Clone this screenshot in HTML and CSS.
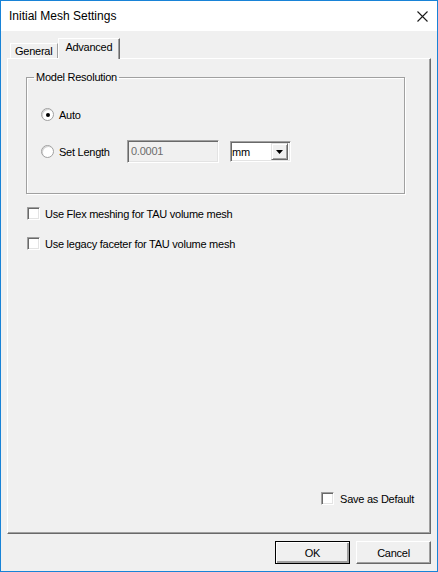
FILE: index.html
```html
<!DOCTYPE html>
<html lang="en">
  <head>
    <meta charset="UTF-8" />
    <title>Initial Mesh Settings</title>
    <link rel="stylesheet" href="styles.css">
  </head>
  <body>
    <div class="window">
      <div class="titlebar">
        <span class="title">Initial Mesh Settings</span>
        <svg class="close" width="11" height="11" viewBox="0 0 11 11">
          <path d="M0.5 0.5 L10.5 10.5 M10.5 0.5 L0.5 10.5" stroke="#1a1a1a" stroke-width="1.1" fill="none" />
        </svg>
      </div>
      <div class="client">
        <div class="tabs">
          <div class="tab">General</div>
          <div class="tab selected">Advanced</div>
        </div>
        <div class="page">
          <fieldset class="group">
            <legend>Model Resolution</legend>
            <div class="opt-row">
              <span class="radio checked"></span>
              <span class="opt-label">Auto</span>
            </div>
            <div class="opt-row tall">
              <span class="radio"></span>
              <span class="opt-label fixed">Set Length</span>
              <span class="textbox">0.0001</span>
              <span class="combo">
                <span class="combo-text">mm</span>
                <span class="combo-btn">
                  <svg width="7" height="4" viewBox="0 0 7 4"><path d="M0 0 H7 L3.5 4 Z" fill="#000" /></svg>
                </span>
              </span>
            </div>
          </fieldset>
          <div class="check-row first">
            <span class="checkbox"></span>
            <span class="check-label">Use Flex meshing for TAU volume mesh</span>
          </div>
          <div class="check-row">
            <span class="checkbox"></span>
            <span class="check-label">Use legacy faceter for TAU volume mesh</span>
          </div>
          <div class="spacer"></div>
          <div class="check-row default">
            <span class="checkbox"></span>
            <span class="check-label">Save as Default</span>
          </div>
        </div>
        <div class="buttons">
          <button class="btn ok" type="button">OK</button>
          <button class="btn" type="button">Cancel</button>
        </div>
      </div>
    </div>
  </body>
</html>
```

FILE: styles.css
```css
html {
  font-family: "Liberation Sans", Arial, sans-serif;
  font-size: 11px;
  letter-spacing: -0.25px;
  color: #000;
}
body {
  margin: 0;
  padding: 0;
}
.window {
  width: 438px;
  height: 572px;
  box-sizing: border-box;
  border: 1px solid #1883d7;
  display: flex;
  flex-direction: column;
  background: #f0f0f0;
}
.titlebar {
  height: 30px;
  background: #fff;
  display: flex;
  align-items: center;
  justify-content: space-between;
  padding: 0 9px 0 8px;
}
.title {
  font-size: 12px;
  letter-spacing: 0;
  color: #000;
}
.client {
  flex: 1;
  display: flex;
  flex-direction: column;
  padding: 8px 6px 7px 6px;
}
.tabs {
  height: 19px;
  display: flex;
  align-items: flex-end;
  padding-left: 3px;
}
.tab {
  height: 14px;
  line-height: 15px;
  padding: 0 5px 0 4px;
  border-top: 1px solid #fff;
  border-left: 1px solid #fff;
  border-right: 1px solid #a0a0a0;
}
.tab.selected {
  height: 18px;
  line-height: 16px;
  margin-bottom: -1px;
  padding: 0 7px 2px 6px;
  background: #f0f0f0;
  border-right: 1px solid #696969;
  box-shadow: inset -1px 0 0 #a0a0a0;
  position: relative;
  z-index: 1;
}
.page {
  height: 476px;
  box-sizing: border-box;
  border-top: 1px solid #fff;
  border-left: 1px solid #fff;
  border-right: 1px solid #696969;
  border-bottom: 1px solid #696969;
  box-shadow: inset -1px -1px 0 #a0a0a0;
  display: flex;
  flex-direction: column;
  padding-top: 11px;
}
.group {
  margin: 0 0 0 18px;
  width: 379px;
  box-sizing: border-box;
  border: 1px solid #a0a0a0;
  box-shadow: 1px 1px 0 #fff, inset 1px 1px 0 #fff;
  padding: 24px 0 30px 7px;
}
.group legend {
  padding: 0 2px;
  line-height: 14px;
}
.opt-row {
  display: flex;
  align-items: center;
  height: 13px;
  margin-left: 7px;
}
.opt-row.tall {
  height: 23px;
  margin-top: 19px;
}
.radio {
  width: 13px;
  height: 13px;
  box-sizing: border-box;
  border-radius: 50%;
  border: 1px solid #a0a0a0;
  background: #fff;
  box-shadow: inset 1px 1px 0 #d4d4d4;
  display: flex;
  align-items: center;
  justify-content: center;
  margin-right: 5px;
}
.radio.checked::after {
  content: "";
  width: 4px;
  height: 4px;
  border-radius: 50%;
  background: #000;
}
.opt-label.fixed {
  width: 68px;
}
.textbox {
  width: 92px;
  height: 23px;
  box-sizing: border-box;
  border-top: 1px solid #a0a0a0;
  border-left: 1px solid #a0a0a0;
  border-right: 1px solid #fff;
  border-bottom: 1px solid #fff;
  box-shadow: inset 1px 1px 0 #696969, inset -1px -1px 0 #e3e3e3;
  padding: 4px 0 0 3px;
  color: #6d6d6d;
}
.combo {
  width: 61px;
  height: 21px;
  margin-left: 11px;
  box-sizing: border-box;
  border-top: 1px solid #a0a0a0;
  border-left: 1px solid #a0a0a0;
  border-right: 1px solid #fff;
  border-bottom: 1px solid #fff;
  box-shadow: inset 1px 1px 0 #696969, inset -1px -1px 0 #e3e3e3;
  background: #fff;
  display: flex;
  align-items: center;
  padding: 2px;
}
.combo-text {
  flex: 1;
  margin-left: -1px;
}
.combo-btn {
  width: 17px;
  height: 17px;
  box-sizing: border-box;
  background: #f0f0f0;
  border-top: 1px solid #e3e3e3;
  border-left: 1px solid #e3e3e3;
  border-right: 1px solid #696969;
  border-bottom: 1px solid #696969;
  box-shadow: inset 1px 1px 0 #fff, inset -1px -1px 0 #a0a0a0;
  display: flex;
  align-items: center;
  justify-content: center;
}
.check-row {
  display: flex;
  align-items: center;
  height: 13px;
  margin-left: 19px;
  margin-top: 17px;
}
.check-row.first {
  margin-top: 13px;
}
.checkbox {
  width: 13px;
  height: 13px;
  box-sizing: border-box;
  background: #fff;
  border-top: 1px solid #a0a0a0;
  border-left: 1px solid #a0a0a0;
  border-right: 1px solid #fff;
  border-bottom: 1px solid #fff;
  box-shadow: inset 1px 1px 0 #696969, inset -1px -1px 0 #e3e3e3;
  margin-right: 5px;
}
.spacer {
  flex: 1;
}
.check-row.default {
  margin: 0 16px 28px 0;
  justify-content: flex-end;
}
.check-row.default .checkbox {
  margin-right: 6px;
}
.buttons {
  display: flex;
  justify-content: flex-end;
  gap: 6px;
  margin-top: 7px;
}
.btn {
  width: 75px;
  height: 23px;
  font-family: "Liberation Sans", Arial, sans-serif;
  font-size: 11px;
  letter-spacing: -0.25px;
  color: #000;
  background: #f0f0f0;
  border-top: 1px solid #fff;
  border-left: 1px solid #fff;
  border-right: 1px solid #696969;
  border-bottom: 1px solid #696969;
  box-shadow: inset -1px -1px 0 #a0a0a0;
  padding: 0;
}
.btn.ok {
  outline: 1px solid #000;
  outline-offset: -1px;
  box-shadow: inset 1px 1px 0 #fff, inset -2px -2px 0 #a0a0a0;
}
```
